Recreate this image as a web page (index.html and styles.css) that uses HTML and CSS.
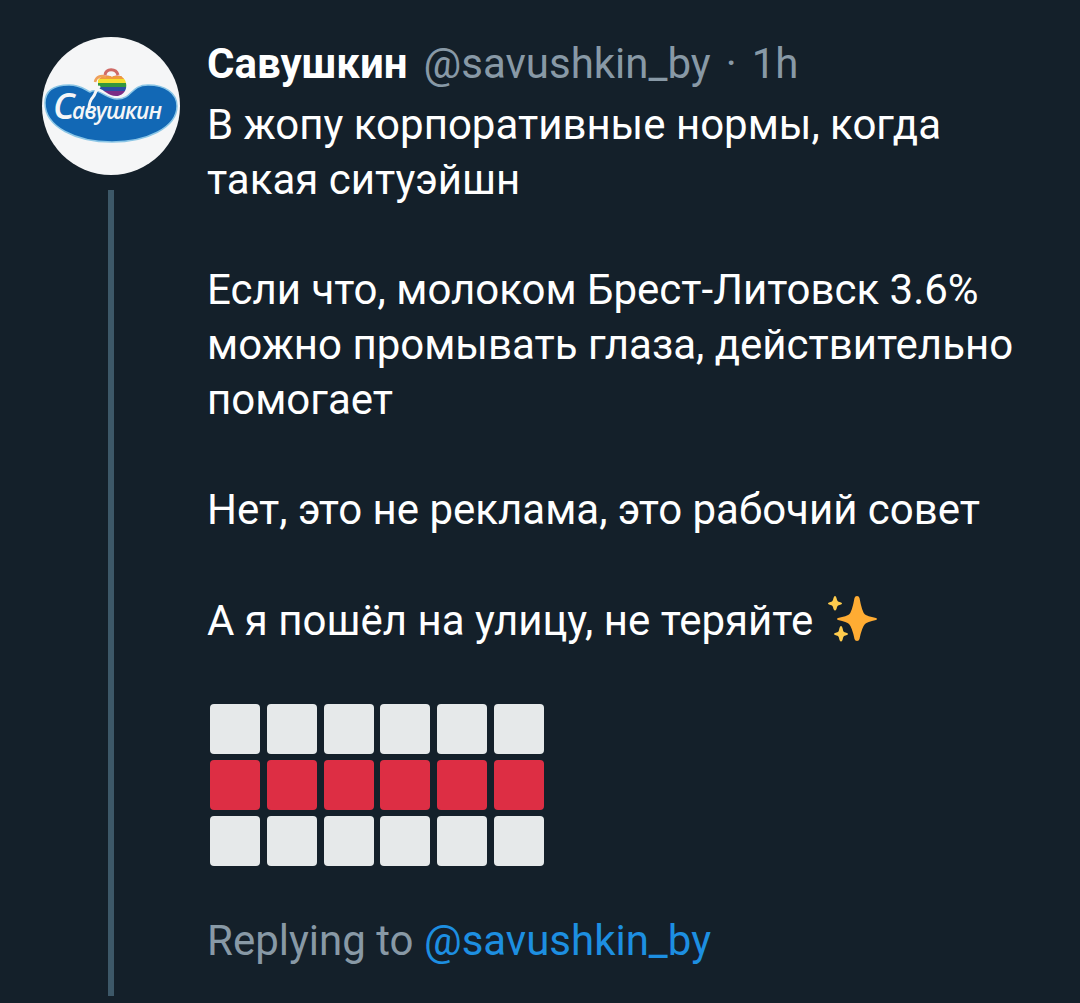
FILE: index.html
```html
<!DOCTYPE html>
<html lang="ru">
<head>
    <meta charset="UTF-8">
    <meta name="viewport" content="width=device-width, initial-scale=1.0">
    <title>Савушкин</title>
    <link rel="stylesheet" href="styles.css">
</head>
<body>

<article class="tweet">
    <div class="tweet-side">
        <svg class="avatar" viewBox="0 0 138 138">
            <defs>
                <clipPath id="bag">
                    <path d="M56 43 Q62 36 70 40 Q78 36 83 43 C87 52 81 59 74 59 C66 59 63 53 56 51 Z"/>
                </clipPath>
            </defs>
            <circle cx="69" cy="69" r="69" fill="#f5f6f7"/>
            <path class="logo-blob" d="M3 66 C3 53 13 48 27 48 C38 48 42 52 48 55 C56 50 64 62 75 62 C91 62 88 48 106 48 C123 48 135 56 135 69 C135 91 104 105 70 105 C34 105 3 90 3 66 Z"/>
            <path class="bag-handle" d="M63 38 C64 31 74 31 76 38"/>
            <g clip-path="url(#bag)">
                <rect x="50" y="34" width="38" height="6" fill="#e0564a"/>
                <rect x="50" y="39" width="38" height="3" fill="#ee9b3c"/>
                <rect x="50" y="42" width="38" height="4" fill="#f5df2e"/>
                <rect x="50" y="46" width="38" height="4" fill="#34973d"/>
                <rect x="50" y="50" width="38" height="4" fill="#2c4ea3"/>
                <rect x="50" y="54" width="38" height="8" fill="#7b2d86"/>
            </g>
            <path class="bag-string" d="M64 40 C60 38 54 39 53 45"/>
            <path class="logo-swash" d="M57 50 C53 53 54 57 51 60 C48 63 47 66 47 72"/>
            <text class="logo-text" x="11" y="82"><tspan class="logo-initial">С</tspan>авушкин</text>
        </svg>
        <div class="thread-line"></div>
    </div>

    <div class="tweet-main">
        <div class="tweet-header">
            <strong class="name">Савушкин</strong>
            <span class="meta">@savushkin_by</span>
            <span class="meta dot">·</span>
            <span class="meta">1h</span>
        </div>

        <div class="tweet-text">
            <p>В жопу корпоративные нормы, когда<br>такая ситуэйшн</p>
            <p>Если что, молоком Брест-Литовск 3.6%<br>можно промывать глаза, действительно<br>помогает</p>
            <p>Нет, это не реклама, это рабочий совет</p>
            <p>А я пошёл на улицу, не теряйте
                <svg class="sparkles" viewBox="0 0 50 48">
                    <path fill="#ffac33" d="M29 1 Q31 1 31.500 3 Q34 17 37 19.500 Q39 21 48 23 Q50 24 48 25 Q39 27 37 29 Q34 32 31.500 44 Q31 46 29 46 Q27 46 26.500 44 Q24 32 21 29 Q19 27 10 25 Q8 24 10 23 Q19 21 21 19.500 Q24 17 26.500 3 Q27 1 29 1 Z"/>
                    <path fill="#ffcc4d" d="M7 1 Q8 1 8.500 3 Q9 6 10 6.500 L13 7.500 Q15 8.500 13 9.500 L10 10.500 Q9 11 8.500 14 Q7 17 5.500 14 Q5 11 4 10.500 L1 9.500 Q-1 8.500 1 7.500 L4 6.500 Q5 6 5.500 3 Q6 1 7 1 Z"/>
                    <path fill="#ffcc4d" d="M13 31 Q14 31 14.500 33 Q15 36 16 37 L19 38 Q21 39 19 40 L16 41 Q15 42 14.500 45 Q13 48 11.500 45 Q11 42 10 41 L7 40 Q5 39 7 38 L10 37 Q11 36 11.500 33 Q12 31 13 31 Z"/>
                </svg>
            </p>
        </div>

        <div class="flag">
            <i></i><i></i><i></i><i></i><i></i><i></i>
            <i class="red"></i><i class="red"></i><i class="red"></i><i class="red"></i><i class="red"></i><i class="red"></i>
            <i></i><i></i><i></i><i></i><i></i><i></i>
        </div>

        <div class="reply">Replying to <a href="#">@savushkin_by</a></div>
    </div>
</article>

</body>
</html>
```
FILE: styles.css
```css
:root {
    --bg-color: #14202a;
    --text-color: #ffffff;
    --muted-color: #8899a6;
    --link-color: #1d8fe1;
    --line-color: #3d5868;
}
* {
    box-sizing: border-box;
}
body {
    margin: 0;
    background-color: var(--bg-color);
    color: var(--text-color);
    font-family: Roboto, 'Noto Sans', sans-serif;
    font-size: 42px;
    line-height: 55px;
}
.tweet {
    display: flex;
    gap: 27px;
    height: 1003px;
    padding: 37px 40px 7px 42px;
}
.tweet-side {
    display: flex;
    flex-direction: column;
    align-items: center;
    gap: 15px;
    width: 138px;
}
.avatar {
    display: block;
    width: 138px;
    height: 138px;
}
.thread-line {
    flex: 1;
    width: 6px;
    background-color: var(--line-color);
}
.logo-blob {
    fill: #1268b5;
    stroke: #8bc6e6;
    stroke-width: 1.5;
}
.bag-handle {
    fill: none;
    stroke: #cf6a66;
    stroke-width: 3;
}
.bag-string {
    fill: none;
    stroke: #efa05a;
    stroke-width: 2.5;
}
.logo-swash {
    fill: none;
    stroke: #f5f6f7;
    stroke-width: 3;
    stroke-linecap: round;
}
.logo-text {
    fill: #f5f6f7;
    font-family: 'Open Sans', 'Noto Sans', sans-serif;
    font-size: 22.5px;
    font-style: italic;
    font-weight: 600;
    letter-spacing: -0.9px;
}
.logo-initial {
    font-size: 36px;
    letter-spacing: -2.5px;
}
.tweet-main {
    flex: 1;
    white-space: nowrap;
}
.tweet-header {
    display: flex;
    gap: 16px;
    height: 60px;
    line-height: 53px;
}
.name {
    font-weight: 700;
}
.meta {
    color: var(--muted-color);
}
.dot {
    margin: 0 -1px;
}
.tweet-text p {
    margin: 0 0 55px;
}
.tweet-text p:last-child {
    margin: 56px 0 0;
}
.sparkles {
    width: 50px;
    height: 48px;
    margin-left: 4px;
    vertical-align: -8px;
}
.flag {
    display: grid;
    grid-template-columns: repeat(6, 50px);
    gap: 6px 6.8px;
    margin: 56px 0 47px 3px;
}
.flag i {
    height: 50px;
    border-radius: 4px;
    background-color: #e6e9ea;
}
.flag .red {
    background-color: #dd2e44;
}
.reply {
    color: var(--muted-color);
}
.reply a {
    color: var(--link-color);
    text-decoration: none;
}
```
